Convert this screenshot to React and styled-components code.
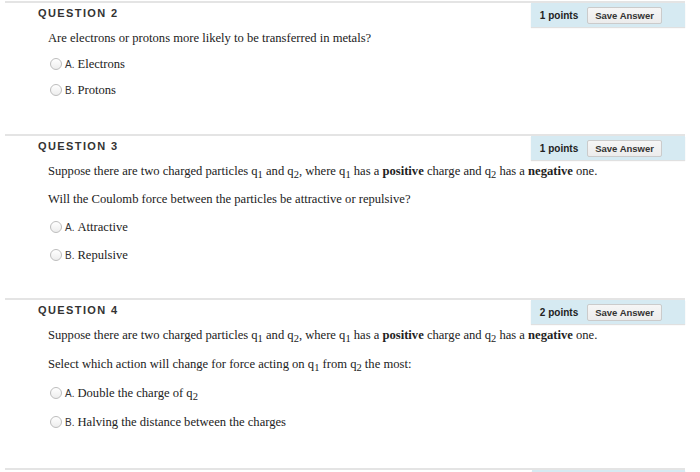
import React from "react";
import styled, { createGlobalStyle } from "styled-components";

const GlobalStyle = createGlobalStyle`
  html, body {
    margin: 0;
    padding: 0;
    background: #fff;
    overflow: hidden;
  }
  body {
    font-family: "Liberation Serif", "Times New Roman", serif;
    color: #222;
  }
`;

const Page = styled.div`
  padding: 1px 15px 0 5px;
`;

const Section = styled.section`
  border-top: 2px solid #e4e4e4;
  padding-bottom: ${(p) => p.$bottom || 33}px;
`;

const Header = styled.div`
  display: flex;
  justify-content: space-between;
  height: 25px;
`;

const Label = styled.h3`
  margin: 4px 0 0 33px;
  font-family: "Liberation Sans", Arial, sans-serif;
  font-size: 11px;
  line-height: 13px;
  font-weight: bold;
  letter-spacing: 1.4px;
  color: #333;
`;

const PointsBox = styled.div`
  display: flex;
  align-items: center;
  gap: 9px;
  height: 24px;
  min-width: 153px;
  box-sizing: border-box;
  margin-left: auto;
  padding: 0 23px 0 9px;
  background: #d6eaf2;
  box-shadow: 0 1px 1px rgba(0, 0, 0, 0.12);
  font-family: "Liberation Sans", Arial, sans-serif;
`;

const Points = styled.span`
  font-size: 10px;
  font-weight: bold;
  color: #222;
`;

const SaveButton = styled.button`
  height: 17px;
  padding: 0 7px;
  border: 1px solid #cbcbcb;
  border-radius: 2px;
  background: linear-gradient(#f6f6f6, #ececec);
  font-family: "Liberation Sans", Arial, sans-serif;
  font-size: 9.5px;
  font-weight: bold;
  color: #333;
`;

const Body = styled.div`
  display: flex;
  flex-direction: column;
  gap: ${(p) => p.$pitch - 20}px;
  padding-left: 43px;

  sub {
    font-size: 10.5px;
    line-height: 0;
    vertical-align: -3px;
  }
`;

const Text = styled.p`
  margin: 0;
  font-size: 12.6px;
  line-height: 20px;
  height: 20px;
`;

const Option = styled.label`
  display: flex;
  align-items: center;
  height: 20px;
  margin-left: 2px;
  font-size: 12.6px;
`;

const Radio = styled.span`
  width: 10px;
  height: 10px;
  margin-right: 3px;
  border: 1px solid #bdbdbd;
  border-radius: 50%;
  background: linear-gradient(#fff, #ededed);
`;

const Letter = styled.span`
  margin-right: 3px;
  font-family: "Liberation Sans", Arial, sans-serif;
  font-size: 10px;
  color: #333;
`;

const q = (n) => (
  <>
    q<sub>{n}</sub>
  </>
);

const setup = (
  <Text>
    Suppose there are two charged particles {q(1)} and {q(2)}, where {q(1)} has
    a <b>positive</b> charge and {q(2)} has a <b>negative</b> one.
  </Text>
);

const questions = [
  {
    id: 2,
    points: 1,
    pitch: 26,
    bottom: 34,
    text: [
      <Text key="t">
        Are electrons or protons more likely to be transferred in metals?
      </Text>,
    ],
    options: ["Electrons", "Protons"],
  },
  {
    id: 3,
    points: 1,
    pitch: 28,
    bottom: 33,
    text: [
      <React.Fragment key="s">{setup}</React.Fragment>,
      <Text key="t">
        Will the Coulomb force between the particles be attractive or repulsive?
      </Text>,
    ],
    options: ["Attractive", "Repulsive"],
  },
  {
    id: 4,
    points: 2,
    pitch: 29,
    bottom: 36,
    text: [
      <React.Fragment key="s">{setup}</React.Fragment>,
      <Text key="t">
        Select which action will change for force acting on {q(1)} from {q(2)}{" "}
        the most:
      </Text>,
    ],
    options: [
      <>Double the charge of {q(2)}</>,
      "Halving the distance between the charges",
    ],
  },
];

const Question = ({ id, points, pitch, bottom, text, options }) => (
  <Section $bottom={bottom}>
    <Header>
      <Label>QUESTION {id}</Label>
      <PointsBox>
        <Points>{points} points</Points>
        <SaveButton>Save Answer</SaveButton>
      </PointsBox>
    </Header>
    <Body $pitch={pitch}>
      {text}
      {options.map((o, i) => (
        <Option key={i}>
          <Radio />
          <Letter>{i === 0 ? "A." : "B."}</Letter>
          <span>{o}</span>
        </Option>
      ))}
    </Body>
  </Section>
);

const App = () => (
  <Page>
    <GlobalStyle />
    {questions.map((qs) => (
      <Question key={qs.id} {...qs} />
    ))}
    <Section>
      <Header>
        <PointsBox />
      </Header>
    </Section>
  </Page>
);

export default App;
